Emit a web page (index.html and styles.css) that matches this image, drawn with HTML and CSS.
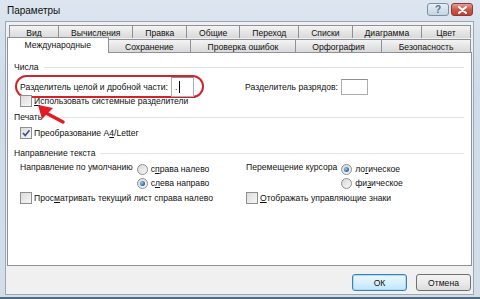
FILE: index.html
```html
<!DOCTYPE html>
<html lang="ru">
<head>
    <meta charset="UTF-8">
    <title>Параметры</title>
    <link rel="stylesheet" href="styles.css">
</head>
<body>
<div class="window">
    <div class="titlebar">
        <span class="title">Параметры</span>
        <div class="caption-buttons">
            <span class="cap-btn help">?</span>
            <span class="cap-btn close">
                <svg width="9" height="8" viewBox="0 0 9 8"><path d="M1 1 L8 7 M8 1 L1 7" stroke="#fff" stroke-width="2" stroke-linecap="round"/></svg>
            </span>
        </div>
    </div>

    <div class="client">
        <div class="tab-row back">
            <span class="tab">Вид</span>
            <span class="tab">Вычисления</span>
            <span class="tab">Правка</span>
            <span class="tab">Общие</span>
            <span class="tab">Переход</span>
            <span class="tab">Списки</span>
            <span class="tab">Диаграмма</span>
            <span class="tab">Цвет</span>
        </div>
        <div class="tab-row front">
            <span class="tab active">Международные</span>
            <span class="tab">Сохранение</span>
            <span class="tab">Проверка ошибок</span>
            <span class="tab">Орфография</span>
            <span class="tab">Безопасность</span>
        </div>

        <div class="panel">
            <div class="group-title"><span>Числа</span></div>
            <div class="split">
                <div class="col">
                    <div class="marked">
                        <span>Разделитель целой и дробной части:</span>
                        <span class="field wide">.<i class="caret"></i></span>
                    </div>
                </div>
                <div class="col field-row">
                    <span>Разделитель разрядов:</span>
                    <span class="field"></span>
                </div>
            </div>
            <div class="check system">
                <span class="box"></span>
                <span><u>И</u>спользовать системные разделители</span>
            </div>

            <div class="group-title print"><span>Печать</span></div>
            <div class="check a4">
                <span class="box checked">
                    <svg width="10" height="10" viewBox="0 0 10 10"><path d="M2 5 L4.2 7.5 L8.5 2.2" fill="none" stroke="#3d4f86" stroke-width="1.6"/></svg>
                </span>
                <span>Преобразование A<u>4</u>/Letter</span>
            </div>

            <div class="group-title direction"><span>Направление текста</span></div>
            <div class="split radios">
                <div class="col radio-field">
                    <span>Направление по умолчанию</span>
                    <div class="radio-list">
                        <div class="option"><span class="radio"></span><span>с<u>п</u>рава налево</span></div>
                        <div class="option"><span class="radio on"></span><span>с<u>л</u>ева направо</span></div>
                    </div>
                </div>
                <div class="col radio-field">
                    <span>Перемещение курсора</span>
                    <div class="radio-list">
                        <div class="option"><span class="radio on"></span><span>ло<u>г</u>ическое</span></div>
                        <div class="option"><span class="radio"></span><span>фи<u>з</u>ическое</span></div>
                    </div>
                </div>
            </div>
            <div class="split checks">
                <div class="col check">
                    <span class="box"></span>
                    <span>Прос<u>м</u>атривать текущий лист справа налево</span>
                </div>
                <div class="col check">
                    <span class="box"></span>
                    <span><u>О</u>тображать управляющие знаки</span>
                </div>
            </div>
        </div>

        <div class="buttons">
            <span class="btn default">ОК</span>
            <span class="btn">Отмена</span>
        </div>
    </div>

    <!-- red pointer drawn over the dialog -->
    <svg class="arrow" width="480" height="299" viewBox="0 0 480 299">
        <path d="M46 113 L63 122" stroke="#e21b25" stroke-width="3.5" stroke-linecap="round"/>
        <polygon points="38,105 53,108 42,119" fill="#e21b25"/>
    </svg>
</div>
</body>
</html>
```

FILE: styles.css
```css
body {
    margin: 0;
    font-family: "Liberation Sans", Arial, sans-serif;
    font-size: 8.6px;
    color: #111;
    white-space: nowrap;
}

.window {
    width: 480px;
    height: 299px;
    box-sizing: border-box;
    position: relative;
    display: flex;
    flex-direction: column;
    background: linear-gradient(#dde6f0, #cfdbe8 30%, #d3dee9);
    border-bottom: 2px solid #4d6a80;
}

.titlebar {
    height: 21px;
    flex: none;
    display: flex;
    align-items: center;
    padding-left: 7px;
}
.title {
    font-size: 10px;
    color: #111;
}
.caption-buttons {
    margin-left: auto;
    margin-right: 7px;
    display: flex;
    gap: 2px;
    align-self: flex-start;
    margin-top: 3px;
}
.cap-btn {
    width: 22px;
    height: 13px;
    box-sizing: border-box;
    border: 1px solid #7d8fa3;
    border-radius: 3px;
    display: flex;
    align-items: center;
    justify-content: center;
}
.help {
    background: linear-gradient(#e6eef6, #c5d4e4);
    color: #5a7088;
    font-size: 10px;
    font-weight: bold;
}
.close {
    border-color: #8b3a3a;
    background: linear-gradient(#e3a091, #c85a4a 50%, #c2402f);
}

.client {
    flex: 1;
    margin: 0 6px 2px 5px;
    border: 1px solid #98a8b8;
    background: #f0f0f0;
    padding: 3px 1px 0 1px;
    display: flex;
    flex-direction: column;
}

.tab-row {
    display: flex;
    height: 13px;
    margin-right: 1px;
}
.tab-row.back {
    margin-left: 2px;
    margin-bottom: 1px;
}
.tab {
    flex: 1 1 auto;
    min-width: 50px;
    box-sizing: border-box;
    padding: 0 12px;
    text-align: center;
    line-height: 14px;
    font-size: 8.6px;
    border: 1px solid #8e9199;
    border-bottom: none;
    margin-left: -1px;
    background: linear-gradient(#f4f4f4, #e6e6e6 50%, #d9d9d9);
}
.tab:first-child {
    margin-left: 0;
}
.tab.active {
    background: #fff;
    position: relative;
    z-index: 2;
    margin-top: -2px;
    margin-bottom: -1px;
    line-height: 15px;
}

.panel {
    height: 214px;
    box-sizing: border-box;
    border: 1px solid #8e9199;
    background: #fff;
    padding: 7px 7px 0 6px;
}

.group-title {
    display: flex;
    align-items: center;
    gap: 5px;
    height: 14px;
}
.group-title::after {
    content: "";
    flex: 1;
    height: 1px;
    background: #e0e3e8;
}
.group-title.print {
    margin-top: 2px;
}
.group-title.direction {
    margin-top: 6px;
}

.split {
    display: flex;
}
.split .col {
    box-sizing: border-box;
}
.split .col:first-child {
    width: 231px;
    flex: none;
}

.marked {
    display: inline-flex;
    align-items: center;
    gap: 3px;
    height: 23px;
    box-sizing: border-box;
    margin: 1px 0 0 1px;
    padding: 0 8px 0 3px;
    border: 2px solid #d2232a;
    border-radius: 12px;
}

.field {
    display: inline-flex;
    align-items: center;
    width: 27px;
    height: 16px;
    box-sizing: border-box;
    border: 1px solid #abadb3;
    border-top-color: #8d9097;
    background: #fff;
}
.field.wide {
    width: 23px;
    height: 20px;
    padding-left: 3px;
}
.caret {
    width: 1px;
    height: 12px;
    background: #000;
    margin-left: 2px;
}
.field-row {
    display: flex;
    align-items: center;
    gap: 3px;
    padding-top: 2px;
}

.check {
    display: flex;
    align-items: center;
    gap: 2px;
    height: 14px;
    padding-left: 6px;
}
.check.system {
    margin-top: -4px;
}
.check.a4 {
    margin-top: 2px;
}

.box {
    flex: none;
    width: 12px;
    height: 12px;
    box-sizing: border-box;
    border: 1px solid #8e8f8f;
    background: linear-gradient(135deg, #dcdcdc, #f6f6f6);
    display: flex;
    align-items: center;
    justify-content: center;
}

.radios {
    margin-top: 2px;
}
.radio-field {
    display: flex;
    gap: 4px;
    padding-left: 6px;
}
.split .col.radio-field + .col.radio-field {
    padding-left: 1px;
}
.radio-list {
    display: flex;
    flex-direction: column;
}
.option {
    display: flex;
    align-items: center;
    gap: 3px;
    height: 14px;
}
.radio {
    flex: none;
    width: 11px;
    height: 11px;
    box-sizing: border-box;
    border: 1px solid #8e8f8f;
    border-radius: 50%;
    background: linear-gradient(135deg, #d8d8d8, #f7f7f7);
    display: flex;
    align-items: center;
    justify-content: center;
}
.radio.on::after {
    content: "";
    width: 5px;
    height: 5px;
    border-radius: 50%;
    background: radial-gradient(circle at 35% 35%, #9cc4ee, #2a62a8 70%);
}

.checks {
    margin-top: 1px;
}
.checks .col + .col {
    padding-left: 1px;
}

.buttons {
    display: flex;
    justify-content: flex-end;
    gap: 9px;
    margin-top: 8px;
    margin-right: 1px;
}
.btn {
    width: 55px;
    height: 17px;
    box-sizing: border-box;
    border: 1px solid #707070;
    border-radius: 3px;
    background: linear-gradient(#f2f2f2, #ebebeb 50%, #dcdcdc);
    display: flex;
    align-items: center;
    justify-content: center;
    font-size: 8.6px;
}
.btn.default {
    border-color: #3c7fb1;
    box-shadow: inset 0 0 0 1px #a8dbf5;
    background: linear-gradient(#eaf6fd, #d9f0fc 50%, #bee6fd);
}

.arrow {
    position: absolute;
    left: 0;
    top: 0;
    pointer-events: none;
}
```
